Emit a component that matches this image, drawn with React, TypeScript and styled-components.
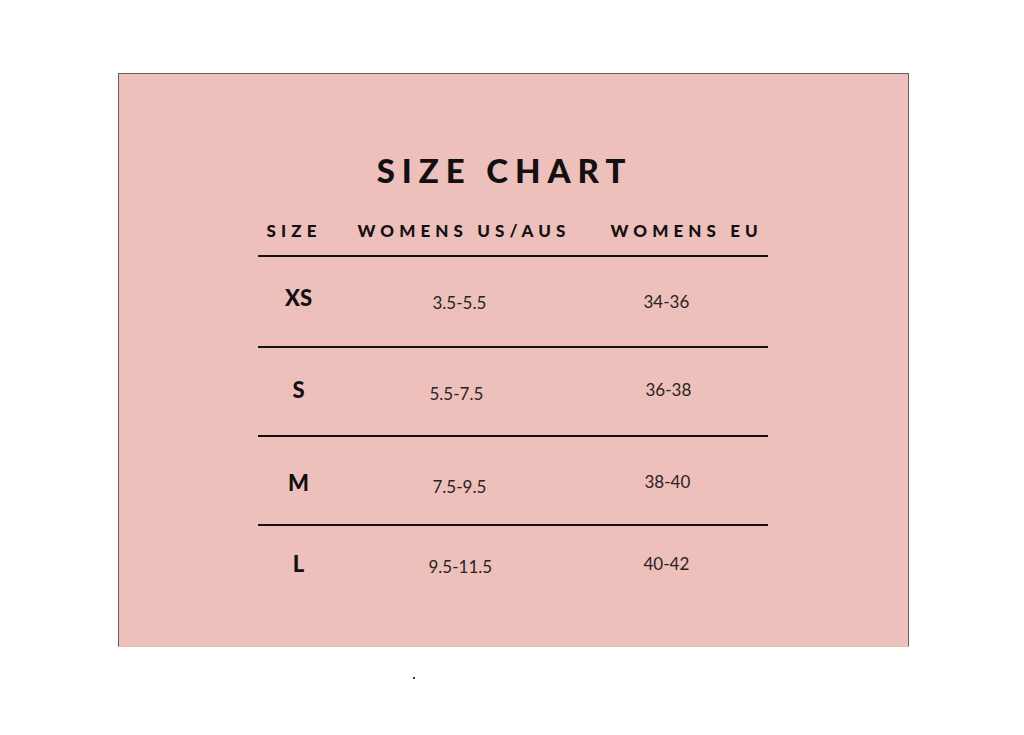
import React from "react";
import styled, { createGlobalStyle } from "styled-components";

const GlobalStyle = createGlobalStyle`
  html, body {
    margin: 0;
    padding: 0;
    background: #ffffff;
  }
  body {
    font-family: Lato, "Open Sans", sans-serif;
    color: #141012;
  }
`;

const Page = styled.div`
  width: 1024px;
  height: 735px;
  padding: 73px 0 0 118px;
  box-sizing: border-box;
  position: relative;
`;

const Card = styled.section`
  width: 791px;
  height: 574px;
  box-sizing: border-box;
  background: #edc0bb;
  border: 1px solid #6b5a5a;
  border-bottom-color: #e8bdb8;
  display: flex;
  flex-direction: column;
  align-items: center;
  padding-top: 78px;
`;

const Title = styled.h1`
  margin: 0 18px 0 0;
  font-size: 33px;
  line-height: 36px;
  font-weight: 900;
  letter-spacing: 0.21em;
`;

const Table = styled.div`
  width: 510px;
  margin-top: 31px;
  margin-left: -2px;
`;

const Grid = styled.div<{ $height: number; $rule?: boolean; $padBottom?: number }>`
  display: grid;
  grid-template-columns: 100px 253px 157px;
  align-items: center;
  box-sizing: border-box;
  height: ${(p) => p.$height}px;
  padding-bottom: ${(p) => p.$padBottom ?? 0}px;
  border-top: ${(p) => (p.$rule ? "2px solid #141012" : "none")};
`;

const HeadCell = styled.div<{ $pad: number }>`
  padding-left: ${(p) => p.$pad}px;
  font-size: 17px;
  font-weight: 900;
  letter-spacing: 0.3em;
  white-space: nowrap;
`;

const SizeCell = styled.div<{ $dy: number }>`
  width: 82px;
  text-align: center;
  font-size: 22px;
  font-weight: 900;
  transform: translateY(${(p) => p.$dy}px);
`;

const ValueCell = styled.div<{ $pad: number; $dy: number }>`
  padding-left: ${(p) => p.$pad}px;
  font-size: 17px;
  font-weight: 400;
  color: #2a2224;
  transform: translateY(${(p) => p.$dy}px);
`;

const Dot = styled.span`
  position: absolute;
  left: 413px;
  top: 677px;
  width: 2px;
  height: 2px;
  background: #333;
`;

const rows = [
  { size: "XS", us: "3.5-5.5", eu: "34-36", usPad: 75, euPad: 33, h: 91, dy: [-4, 1, 0] },
  { size: "S", us: "5.5-7.5", eu: "36-38", usPad: 72, euPad: 35, h: 89, dy: [-2, 2, -2] },
  { size: "M", us: "7.5-9.5", eu: "38-40", usPad: 75, euPad: 34, h: 89, dy: [2, 6, 1] },
  { size: "L", us: "9.5-11.5", eu: "40-42", usPad: 71, euPad: 33, h: 76, dy: [0, 3, 0] },
];

export default function App() {
  return (
    <Page>
      <GlobalStyle />
      <Card>
        <Title>SIZE CHART</Title>
        <Table>
          <Grid $height={36} $padBottom={14}>
            <HeadCell $pad={9}>SIZE</HeadCell>
            <HeadCell $pad={0}>WOMENS US/AUS</HeadCell>
            <HeadCell $pad={0}>WOMENS EU</HeadCell>
          </Grid>
          {rows.map((r) => (
            <Grid key={r.size} $height={r.h} $rule>
              <SizeCell $dy={r.dy[0]}>{r.size}</SizeCell>
              <ValueCell $pad={r.usPad} $dy={r.dy[1]}>
                {r.us}
              </ValueCell>
              <ValueCell $pad={r.euPad} $dy={r.dy[2]}>
                {r.eu}
              </ValueCell>
            </Grid>
          ))}
        </Table>
      </Card>
      <Dot />
    </Page>
  );
}
